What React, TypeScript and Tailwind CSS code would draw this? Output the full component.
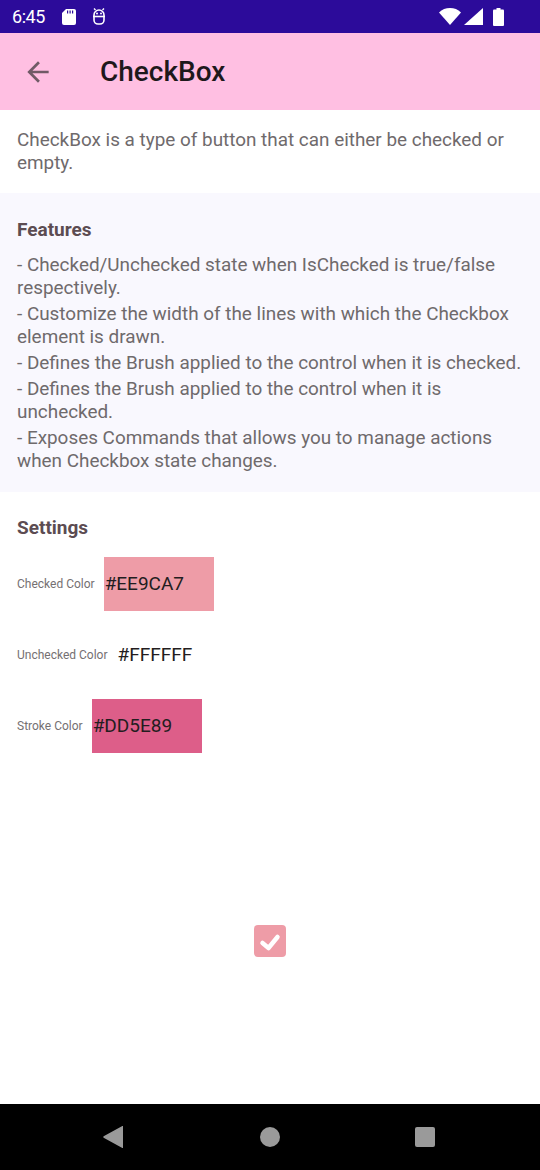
import React from "react";

const features = [
  "- Checked/Unchecked state when IsChecked is true/false respectively.",
  "- Customize the width of the lines with which the Checkbox element is drawn.",
  "- Defines the Brush applied to the control when it is checked.",
  "- Defines the Brush applied to the control when it is unchecked.",
  "- Exposes Commands that allows you to manage actions when Checkbox state changes.",
];

function StatusBar() {
  return (
    <div className="flex h-[33px] items-center bg-[#2c0b9a] pl-3 pr-9 text-white">
      <span className="text-[18px] leading-none tracking-tight">6:45</span>
      {/* sd card */}
      <svg width="14" height="16" viewBox="0 0 14 16" className="ml-[17px]">
        <path d="M4 0h8a2 2 0 0 1 2 2v12a2 2 0 0 1-2 2H2a2 2 0 0 1-2-2V4z" fill="white" />
        <rect x="5" y="1.5" width="1.2" height="3" fill="#2c0b9a" />
        <rect x="7.5" y="1.5" width="1.2" height="3" fill="#2c0b9a" />
        <rect x="10" y="1.5" width="1.2" height="3" fill="#2c0b9a" />
      </svg>
      {/* debug droid */}
      <svg width="14" height="17" viewBox="0 0 14 17" className="ml-4">
        <path
          d="M2 7a5 5 0 0 1 10 0v5a4 4 0 0 1-4 4H6a4 4 0 0 1-4-4z"
          fill="none"
          stroke="white"
          strokeWidth="1.6"
        />
        <path d="M1 8.5h12" stroke="white" strokeWidth="1.6" />
        <path d="M3.5 2L2 0.5M10.5 2L12 0.5" stroke="white" strokeWidth="1.4" />
        <circle cx="5" cy="5.5" r="1" fill="white" />
        <circle cx="9" cy="5.5" r="1" fill="white" />
      </svg>
      <div className="ml-auto flex items-center gap-[2px]">
        <svg width="22" height="17" viewBox="0 0 22 17">
          <path d="M0 4.5A16 16 0 0 1 22 4.5L11 17z" fill="white" />
        </svg>
        <svg width="19" height="17" viewBox="0 0 19 17" className="ml-[1px]">
          <path d="M19 0V17H0z" fill="white" />
        </svg>
        <svg width="11" height="18" viewBox="0 0 11 18" className="ml-[8px]">
          <rect x="3.5" y="0" width="4" height="2" fill="white" />
          <rect x="0" y="1.5" width="11" height="16.5" rx="1" fill="white" />
        </svg>
      </div>
    </div>
  );
}

function NavBar() {
  return (
    <div className="flex h-[66px] items-center bg-black">
      <div className="flex w-full items-center">
        <svg width="20" height="22" viewBox="0 0 20 22" className="ml-[103px]">
          <path d="M20 0.5V21.5L1 11z" fill="#9a9a9a" stroke="#9a9a9a" strokeLinejoin="round" strokeWidth="1.5" />
        </svg>
        <div className="ml-[137px] h-[20px] w-[20px] rounded-full bg-[#9a9a9a]" />
        <div className="ml-[135px] h-[20px] w-[20px] rounded-[2px] bg-[#9a9a9a]" />
      </div>
    </div>
  );
}

function ColorRow({
  label,
  value,
  bg,
}: {
  label: string;
  value: string;
  bg: string;
}) {
  return (
    <div className="flex h-[54px] items-center">
      <span className="text-[12px] text-[#757072]">{label}</span>
      <div className={`ml-[9px] flex h-[54px] w-[110px] items-center pl-[1px] ${bg}`}>
        <span className="text-[19px] text-[#231d20]">{value}</span>
      </div>
    </div>
  );
}

export default function App() {
  return (
    <div
      className="flex h-[1170px] w-[540px] flex-col overflow-hidden bg-white"
      style={{ fontFamily: "Roboto, 'Noto Sans', sans-serif" }}
    >
      <StatusBar />

      <div className="flex h-[77px] items-center bg-[#ffbfe2]">
        <svg width="32" height="32" viewBox="0 0 24 24" className="ml-[22px]">
          <path
            d="M20 11H7.83l5.59-5.59L12 4l-8 8 8 8 1.41-1.41L7.83 13H20v-2z"
            fill="#705a66"
          />
        </svg>
        <h1 className="ml-[46px] text-[28px] font-medium text-[#1e181b]">
          CheckBox
        </h1>
      </div>

      <div className="px-[17px] pt-[18px] pb-[19px] text-[18.9px] leading-[23px] text-[#6f6a6c]">
        CheckBox is a type of button that can either be checked or empty.
      </div>

      <div className="bg-[#f9f8fe] px-[17px] pt-[25px] pb-[20px]">
        <h2 className="text-[19px] font-bold leading-[23px] text-[#5c4c52]">
          Features
        </h2>
        <div className="mt-[12px] flex flex-col gap-[3px]">
          {features.map((f) => (
            <p key={f} className="text-[18.9px] leading-[23px] text-[#6f6a6c]">
              {f}
            </p>
          ))}
        </div>
      </div>

      <div className="px-[17px] pt-[24px]">
        <h2 className="text-[19px] font-bold leading-[23px] text-[#5c4c52]">
          Settings
        </h2>
        <div className="mt-[18px] flex flex-col gap-[17px]">
          <ColorRow label="Checked Color" value="#EE9CA7" bg="bg-[#ee9ca7]" />
          <ColorRow label="Unchecked Color" value="#FFFFFF" bg="bg-white" />
          <ColorRow label="Stroke Color" value="#DD5E89" bg="bg-[#dd5e89]" />
        </div>
      </div>

      <div className="mt-[172px] flex justify-center">
        <div className="flex h-[32px] w-[32px] items-center justify-center rounded-[4px] bg-[#ee9ca7]">
          <svg width="32" height="32" viewBox="0 0 32 32">
            <path
              d="M8.5 18L14.5 23L23.5 12"
              fill="none"
              stroke="white"
              strokeWidth="4.5"
              strokeLinecap="round"
              strokeLinejoin="round"
            />
          </svg>
        </div>
      </div>

      <div className="mt-auto">
        <NavBar />
      </div>
    </div>
  );
}
